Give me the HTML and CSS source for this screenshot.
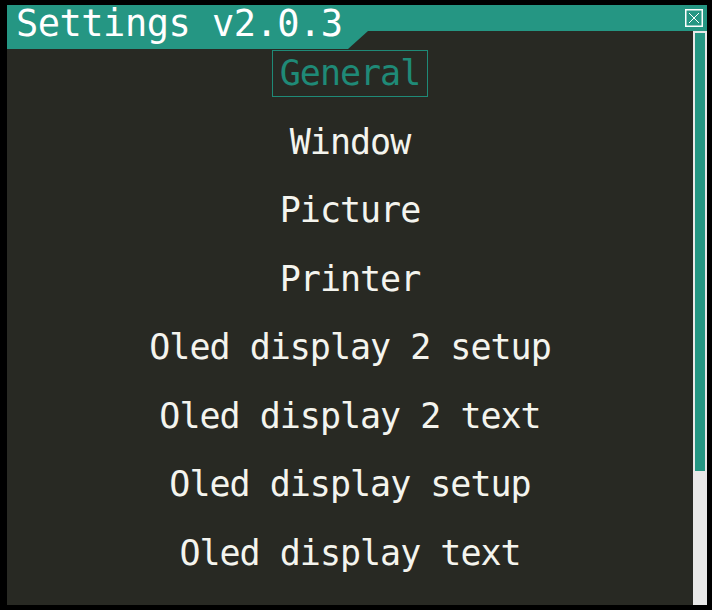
FILE: index.html
```html
<!DOCTYPE html>
<html>
<head>
<meta charset="utf-8">
<link rel="stylesheet" href="styles.css">
</head>
<body>
<div class="window">
  <div class="titlebar">
    <div class="tab"><span class="title">Settings v2.0.3</span></div>
    <div class="close">
      <svg width="18" height="18" viewBox="0 0 18 18">
        <rect x="0.75" y="0.75" width="16.5" height="16.5" fill="none" stroke="#ffffff" stroke-width="1.5"/>
        <path d="M4 4 L14 14 M14 4 L4 14" stroke="#ffffff" stroke-width="1" fill="none"/>
      </svg>
    </div>
  </div>
  <div class="body">
    <div class="list">
      <div class="item selected">General</div>
      <div class="item">Window</div>
      <div class="item">Picture</div>
      <div class="item">Printer</div>
      <div class="item">Oled display 2 setup</div>
      <div class="item">Oled display 2 text</div>
      <div class="item">Oled display setup</div>
      <div class="item">Oled display text</div>
    </div>
    <div class="scrollbar"><div class="thumb"></div></div>
  </div>
</div>
</body>
</html>
```

FILE: styles.css
```css
html, body {
  margin: 0;
  padding: 0;
  background: #000000;
}
body {
  font-family: "DejaVu Sans Mono", monospace;
  color: #f4f4ee;
}
.window {
  margin: 5px 0 0 7px;
  width: 700px;
  height: 600px;
  background: #282923;
  display: flex;
  flex-direction: column;
}
.titlebar {
  height: 26px;
  flex: 0 0 26px;
  background: #259683;
  display: flex;
  justify-content: space-between;
  align-items: flex-start;
}
.tab {
  position: relative;
  z-index: 2;
  width: 361px;
  height: 44px;
  background: #259683;
  clip-path: polygon(0 0, 100% 0, 100% 26px, 341px 44px, 0 44px);
  box-sizing: border-box;
  padding-left: 9px;
}
.title {
  display: block;
  font-size: 37px;
  line-height: 37px;
  letter-spacing: -0.5px;
  color: #ffffff;
  white-space: nowrap;
}
.close {
  width: 18px;
  height: 18px;
  margin: 4px 4px 0 0;
}
.close svg {
  display: block;
}
.body {
  flex: 1;
  display: flex;
  min-height: 0;
}
.list {
  flex: 1;
  display: flex;
  flex-direction: column;
  align-items: center;
  padding-top: 19px;
  gap: 21.5px;
}
.item {
  font-size: 35px;
  line-height: 45px;
  height: 45px;
  letter-spacing: -1px;
  padding: 0 7px;
  border: 1px solid transparent;
  white-space: nowrap;
}
.item.selected {
  color: #1f8a77;
  border-color: #1f8a77;
}
.scrollbar {
  width: 14px;
  box-sizing: border-box;
  padding: 2px;
  background: #e8e8e8;
}
.thumb {
  height: 438px;
  background: #259683;
}
```
